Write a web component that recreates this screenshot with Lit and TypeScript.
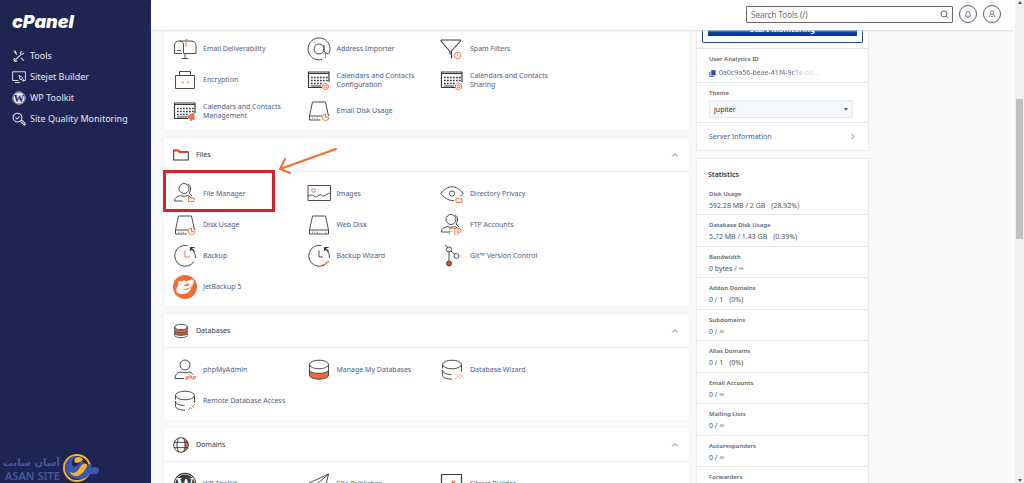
import { LitElement, html, css, svg } from "lit";
import { customElement, property } from "lit/decorators.js";

const O = "#f26b35";

const user = svg`<circle cx="12" cy="7" r="5"/><path d="M2 20.500h9M2 20.500c0-4 2-5.500 5-6.500 3 1 7 1 9 0 2 0.500 3 1 4 2.500"/>`;
const users = svg`<circle cx="11" cy="6.500" r="5"/><path d="M15 2c3 1 3.500 6 1 9l3 3M1.500 19h8M1.500 19c0-3 2-4.500 6-5.500 2 1 5 1 7 0l3 1.500"/>`;
const drive = svg`<path d="M5.500 3h13l3 14M5.500 3 2.500 17v4h11M2.500 17H15"/><path d="M5 19.200h.8M7.500 19.200h.8M10 19.200h.8"/>`;
const calendar = svg`<path d="M22 14V4H1.500v15.500H15M1.500 5.500H22" stroke-width="1.200"/><path d="M4 9.500h17M4 12.500h17M4 15.500h11" stroke-width="1.700" stroke-dasharray="1.700 1.300"/><path d="M4 18h10" stroke-width="1"/>`;
const clock = svg`<path d="M14.500 1.500A10.500 10.500 0 1 0 21 17.500M22.500 14a10.500 10.500 0 0 0-2-7"/><path d="M17.500 7V3.500h4M17.500 3.500l4 4" stroke-width="1.200"/>`;
const cylinder = svg`<ellipse cx="12" cy="6.500" rx="9.500" ry="4.300"/><path d="M2.500 6.500v4M21.500 6.500v7M2.500 12c0 3 4 4.500 9 4.500M2.500 12v5c0 2.500 4 4.200 9.500 4.200"/>`;
const spark = svg`<path stroke=${O} stroke-dasharray="1.500 1" d="M15.500 21l5.500-5.500M16 16.500l1.500 1.500M19 19l1.500 1.500M21 18h1.500"/>`;
const pie = svg`<path stroke=${O} d="M18.500 15a3.300 3.300 0 1 0 3.300 3.300h-3.300zM20 14.500c1.300.3 2 1 2.300 2.300"/>`;
const wordpress = svg`<circle cx="12" cy="12" r="10.700" stroke-width="1.200"/><circle cx="12" cy="12" r="9.600" fill="currentColor" stroke="none"/><text class="wp" x="12" y="18.500">W</text>`;

const icons: Record<string, unknown> = {
  mail: svg`<path d="M9 16.500H1.500V8C1.500 5.500 3.500 4 6 4h12c3 0 5 1.500 5 4.500v8H10.500V8C10.500 5.500 9 4 6.500 4M4 13.500h4M12 16.500V21M8.500 21.500h7"/><path stroke=${O} d="M13 10V2.500h1.500"/>`,
  address: svg`<circle cx="12" cy="12" r="5"/><path d="M17 8v6c1 2.500 3 3 4.500 2.500"/><path d="M22 16.500A11 11 0 1 0 15 22.500"/><path stroke=${O} d="M18.500 21v-5.500M16 17.500l2.500-2.500 2.500 2.500"/>`,
  filter: svg`<path d="M1 3h19.500v1L11.500 14v7.500M1 3v1l9 10.500v3" stroke-width="1.100"/><circle cx="17.500" cy="18.500" r="3.200" stroke=${O}/><path stroke=${O} d="M17.500 17v1.500"/>`,
  lock: svg`<path d="M6.500 7.500v-4h11v4M2.500 7.500h19v13h-19z"/><path stroke=${O} stroke-width="1.600" d="M9 14.500h1.500M14 14.500h1.500"/>`,
  calConfig: svg`${calendar}<circle cx="18.500" cy="18.500" r="3" stroke=${O}/><circle cx="18.500" cy="18.500" r="1.200" stroke=${O}/>`,
  calShare: svg`${calendar}<path stroke=${O} d="M18.500 15l3 1.800v3.400l-3 1.800-3-1.800v-3.400z"/><circle cx="18.500" cy="18.500" r="1.300" stroke=${O}/>`,
  calManage: svg`${calendar}<path fill=${O} stroke=${O} d="M14.500 17.500l6.500-3.500v7l-2.500-1.500v2.500l-2-2.500z"/>`,
  drivePie: svg`${drive}${pie}`,
  drive: svg`${drive}<path d="M13.500 21h8v-4H15M18.500 19.200h.8"/>`,
  fileManager: svg`${users}<path stroke=${O} d="M15.500 19.500v-4.500h2l.6 1H21v3.500z"/>`,
  images: svg`<path d="M1 3.500h22.500v15H1z"/><path d="M1 14.500c2-2 4-2 6-.5s3 .5 5-1 3 2 5 1 4-2.500 6-3"/><circle cx="6.500" cy="8.500" r="1.800" stroke=${O}/>`,
  eye: svg`<path d="M14 18.500C8 19 3.500 15 .8 11.500 8 2.500 16 2.500 23.200 11.500L20 14.500"/><circle cx="12" cy="11.500" r="2.600"/><path stroke=${O} d="M16 20.500V16h2l.6 1H22v3.500z"/>`,
  ftp: svg`${users}<text class="tag" x="8.500" y="21.800" font-size="8">FTP</text>`,
  backup: svg`${clock}<path stroke=${O} d="M12 6.500V13h5"/>`,
  backupWizard: svg`${clock}<path d="M12 6.500V13h4"/>${spark}`,
  git: svg`<path d="M5 1l3 2.500M9 8v9M11 7l4 3.500"/><circle cx="9" cy="5.500" r="2.500"/><circle cx="16.500" cy="12" r="2.500"/><circle cx="9" cy="19.500" r="2.500" fill="#e2522b"/>`,
  jet: svg`<circle cx="12" cy="12" r="12" fill=${O} stroke="none"/><path fill="#fff" stroke="none" d="M5.500 6l3.500.5 2.500-1.500 1 1.500 6.500-2c1.500 0 2 2 1.500 4-.8 3-3.500 4.500-6 5l-4.500.5c.8 1.500 5 .8 8.500-1.500-1.500 4.500-5 6.500-9.500 6.500-4.500 0-6-2-5.500-5l1.500-4.500z"/><path fill=${O} stroke="none" d="M10.500 11c1.500-2 4-3 6-2.300-.5 1.800-3 2.500-6 2.300z"/>`,
  php: svg`${user}<text class="tag heavy" x="12.500" y="20.500" font-size="6">php</text>`,
  manageDb: svg`<path fill=${O} d="M2.500 12v5c0 5.500 19 5.500 19 0v-5c0 4.500-19 4.500-19 0z"/><ellipse cx="12" cy="6.500" rx="9.500" ry="4.300"/><path d="M2.500 6.500V12M21.500 6.500V12"/>`,
  dbWizard: svg`${cylinder}${spark}`,
  remoteDb: svg`${cylinder}<path stroke=${O} d="M15 21l2-2M20 17l2-2M17 18l2 2M18.500 16.500l2 2"/>`,
  wordpress,
  plane: svg`<path d="M2 11L21.500 2l-4 17-6-4.500zM21.500 2L9 13v7l2.500-5.500"/>`,
  sitejet: svg`<path d="M1.500 2.500h20v20h-20z" stroke-width="1.200"/><path fill=${O} stroke=${O} d="M12 9l3 1-1 1 2 2-3 1z"/>`,
  folder: svg`<path d="M1 4.500v15h22V7H10L8.500 4.500z" stroke-width="1.600"/><path stroke="#e2431e" stroke-width="2.200" d="M1.500 5.500H8l1.500 2.500H22"/>`,
  databases: svg`<path fill=${O} d="M2.500 8v7.500c0 4 19 4 19 0V8c0 4-19 4-19 0z"/><path fill="#fff" d="M2.500 15.500v3c0 4.500 19 4.500 19 0v-3c0 4-19 4-19 0z" stroke-width="1.300"/><ellipse cx="12" cy="6" rx="9.500" ry="4" stroke-width="1.300" fill="#fff"/><path d="M2.500 6V9M21.500 6V9M2.500 12c0 4 19 4 19 0" stroke-width="1.300"/>`,
  domains: svg`<path fill=${O} stroke="none" d="M16 1.500c9 3.500 9 17.500 0 21 3-6 3-15 0-21z"/><g stroke-width="1.400"><circle cx="12" cy="12" r="11"/><path d="M1.500 8h21M1.500 16h21M9 1.500c-4 5-4 16 0 21M15 1.500c4 5 4 16 0 21"/></g>`,
  tools: svg`<g stroke-width="1.800"><path d="M4 20.500L15 9.500M8.500 9.500l-4-4M15 15l5.500 5.500"/><path d="M3 3l2.500 1L7 7M20.500 6.500L18 9l-3-.5L14.500 6 17 3.500M9 20l-3 1.500-3-3 2-3"/></g>`,
  monitor: svg`<g stroke-width="1.600"><path d="M11 18H1V3h22v15h-4M5 21.500h9"/><path d="M12 9l6 4-1 1 4 4-1.500 1.500-4-4-1.500 1z"/></g>`,
  quality: svg`<g stroke-width="1.800"><circle cx="9.500" cy="9.500" r="7.500"/><path d="M6 9.500l2.500 2.500L13 7.500M15 15l2-1 6 6.500-2 2-6-6z"/></g>`,
  chevronUp: svg`<path d="M4 16l8-8 8 8" stroke-width="2.600"/>`,
  chevronRight: svg`<path d="M8 3l9 9-9 9" stroke-width="3"/>`,
  search: svg`<circle cx="10.500" cy="10.500" r="8" stroke-width="2.200"/><path d="M16.500 16.500l5 5" stroke-width="2.200"/>`,
  bell: svg`<path d="M3 18.500c2.500-2 2-4 2.500-8a6.500 6.500 0 0 1 13 0c.5 4 0 6 2.500 8zM9 22h6" stroke-width="2"/>`,
  person: svg`<circle cx="12" cy="8" r="5.500" stroke-width="2"/><path d="M4 22c0-5 2.500-7.500 5.500-9M20 22c0-5-2.500-7.500-5.500-9M8 17l4 4 4-4" stroke-width="2"/>`,
  copy: svg`<path fill="#2b4aa0" stroke="#2b4aa0" d="M8 1h14v17H8z"/><path d="M3 6v16h13" stroke="#2b4aa0" stroke-width="3"/>`,
};

@customElement("ui-icon")
class UiIcon extends LitElement {
  @property() name = "";
  static styles = css`
    :host { display: block; flex: none; width: 24px; height: 24px; }
    svg { display: block; width: 100%; height: 100%; overflow: visible; fill: none; stroke: currentColor; stroke-width: 0.900; stroke-linejoin: round; }
    .tag { fill: #f26b35; stroke: none; font-family: "Noto Sans", sans-serif; }
    .heavy { font-weight: 700; font-style: italic; }
    .wp { fill: var(--mark, #fff); stroke: none; font: 700 18px "Liberation Serif", serif; text-anchor: middle; }
  `;
  render() {
    return html`<svg viewBox="0 0 24 24" aria-hidden="true">${icons[this.name]}</svg>`;
  }
}

type Tool = [icon: string, label: string];

const emailTools: Tool[] = [
  ["mail", "Email Deliverability"],
  ["address", "Address Importer"],
  ["filter", "Spam Filters"],
  ["lock", "Encryption"],
  ["calConfig", "Calendars and Contacts Configuration"],
  ["calShare", "Calendars and Contacts Sharing"],
  ["calManage", "Calendars and Contacts Management"],
  ["drivePie", "Email Disk Usage"],
];
const fileTools: Tool[] = [
  ["fileManager", "File Manager"],
  ["images", "Images"],
  ["eye", "Directory Privacy"],
  ["drivePie", "Disk Usage"],
  ["drive", "Web Disk"],
  ["ftp", "FTP Accounts"],
  ["backup", "Backup"],
  ["backupWizard", "Backup Wizard"],
  ["git", "Git™ Version Control"],
  ["jet", "JetBackup 5"],
];
const databaseTools: Tool[] = [
  ["php", "phpMyAdmin"],
  ["manageDb", "Manage My Databases"],
  ["dbWizard", "Database Wizard"],
  ["remoteDb", "Remote Database Access"],
];
const domainTools: Tool[] = [
  ["wordpress", "WP Toolkit"],
  ["plane", "Site Publisher"],
  ["sitejet", "Sitejet Builder"],
];

@customElement("tool-card")
class ToolCard extends LitElement {
  @property() heading = "";
  @property() icon = "";
  @property() highlight = "";
  @property({ attribute: false }) tools: Tool[] = [];
  static styles = css`
    :host { display: block; background: #fff; box-shadow: 0 0 3px #f0f0f0; color: #3a3a3a; }
    .head { display: flex; align-items: center; height: 33px; padding: 0 10px 0 9px; border-bottom: 1px solid #eee; }
    .sectionIcon { width: 16px; height: 16px; }
    h2 { flex: 1; margin: 0 0 0 7px; font-size: 7px; font-weight: 400; color: #293a4a; }
    button { display: flex; padding: 0; border: 0; background: none; color: #666; }
    .chevron { width: 8px; height: 8px; }
    .grid { display: grid; grid-template-columns: repeat(3, minmax(0, 1fr)); grid-auto-rows: 31px; padding: 6px 22% 4px 9px; }
    .headless { padding-top: 3px; }
    .cell { position: relative; display: flex; align-items: center; }
    a { display: flex; align-items: center; gap: 6px; color: #4d6288; text-decoration: none; }
    .toolIcon { color: #3a3a3a; --mark: #fff; }
    .label { max-width: 90px; line-height: 9px; }
    .frame { position: absolute; inset: -8px 32px -3px -10px; border: 3px solid #dc1f2c; pointer-events: none; }
    .arrow { position: absolute; left: 105px; top: -31px; width: 60px; height: 28px; overflow: visible; fill: none; stroke: #f26f2f; stroke-width: 2; stroke-linecap: round; }
  `;
  render() {
    return html`
      ${this.heading
        ? html`<div class="head">
            <ui-icon class="sectionIcon" name=${this.icon}></ui-icon>
            <h2>${this.heading}</h2>
            <button aria-label="Collapse ${this.heading}"><ui-icon class="chevron" name="chevronUp"></ui-icon></button>
          </div>`
        : null}
      <div class="grid ${this.heading ? "" : "headless"}">
        ${this.tools.map(
          ([icon, label]) => html`<div class="cell">
            <a href="#"><ui-icon class="toolIcon" name=${icon}></ui-icon><span class="label">${label}</span></a>
            ${label === this.highlight
              ? html`<div class="frame"></div>
                  <svg class="arrow" viewBox="0 0 60 28" aria-hidden="true"><path d="M58 2L2 22M7 12L2 22l10 4"/></svg>`
              : null}
          </div>`
        )}
      </div>`;
  }
}

const stats: [string, string, string][] = [
  ["Disk Usage", "592.28 MB / 2 GB", "(28.92%)"],
  ["Database Disk Usage", "5.72 MB / 1.43 GB", "(0.39%)"],
  ["Bandwidth", "0 bytes / ∞", ""],
  ["Addon Domains", "0 / 1", "(0%)"],
  ["Subdomains", "0 / ∞", ""],
  ["Alias Domains", "0 / 1", "(0%)"],
  ["Email Accounts", "0 / ∞", ""],
  ["Mailing Lists", "0 / ∞", ""],
  ["Autoresponders", "0 / ∞", ""],
  ["Forwarders", "0 / ∞", ""],
];

@customElement("info-panel")
class InfoPanel extends LitElement {
  static styles = css`
    :host { display: flex; flex-direction: column; gap: 7px; color: #555; }
    .card { background: #fff; border: 1px solid #ececec; }
    .general { border-top: 0; }
    .block { padding: 0 12px; border-bottom: 1px solid #e6e6e6; }
    .promo { padding: 0 5px 5px; }
    .promoFrame { padding: 0 5px 6px; border: 1px solid #1c429c; border-top: 0; border-radius: 0 0 2px 2px; }
    .promo button { display: block; width: 100%; height: 14px; margin-top: -8px; padding: 0; border: 0; background: #0339a6; color: #fff; font: 600 8px/14px "Noto Sans", sans-serif; }
    .caption { display: block; font-size: 6px; font-weight: 600; line-height: 10px; color: #5f6470; }
    .analytics { padding-top: 5px; padding-bottom: 4px; }
    .id { display: flex; align-items: center; gap: 3px; margin-top: 4px; line-height: 10px; }
    .idText { background: linear-gradient(90deg, #53627f 75%, #b9bfca 80%, #dfe2e7); background-clip: text; -webkit-background-clip: text; color: transparent; }
    .copy { width: 7px; height: 7px; }
    .theme { padding-top: 5px; padding-bottom: 4px; }
    .selectBox { position: relative; display: flex; align-items: center; margin: 2px 3px 0 0; }
    select { appearance: none; width: 100%; height: 18px; padding: 0 4px; border: 1px solid #e6eaf0; border-radius: 1px; background: #f4f7fb; color: #333; font: 400 7px "Noto Sans", sans-serif; }
    .caret { position: absolute; right: 5px; border: 2px solid transparent; border-top: 3px solid #666; border-bottom: 0; pointer-events: none; }
    .server { display: flex; justify-content: space-between; align-items: center; height: 27px; padding: 0 12px; color: #4d6288; text-decoration: none; }
    .next { width: 7px; height: 7px; color: #777; }
    h2 { margin: 0; padding: 11px 11px 4px; font-size: 7px; font-weight: 600; line-height: 10px; color: #293a4a; }
    dl { margin: 0; }
    .stat { padding: 5px 12px 3px; border-bottom: 1px solid #e6e6e6; }
    .stat:nth-child(even) { padding-bottom: 4px; }
    dd { display: flex; gap: 6px; margin: 2px 0 0; line-height: 10px; }
  `;
  render() {
    return html`
      <div class="card general">
        <div class="block promo"><div class="promoFrame"><button>Start Monitoring</button></div></div>
        <div class="block analytics">
          <span class="caption">User Analytics ID</span>
          <div class="id"><ui-icon class="copy" name="copy"></ui-icon><span class="idText">0a0c9a56-beae-41f4-9c1e-bb...</span></div>
        </div>
        <div class="block theme">
          <label class="caption" for="theme">Theme</label>
          <div class="selectBox"><select id="theme"><option>jupiter</option></select><span class="caret"></span></div>
        </div>
        <a class="server" href="#">Server Information<ui-icon class="next" name="chevronRight"></ui-icon></a>
      </div>
      <div class="card">
        <h2>Statistics</h2>
        <dl>
          ${stats.map(
            ([name, value, share]) => html`<div class="stat">
              <dt class="caption">${name}</dt>
              <dd><span>${value}</span>${share ? html`<span>${share}</span>` : null}</dd>
            </div>`
          )}
        </dl>
      </div>`;
  }
}

@customElement("app-root")
class AppRoot extends LitElement {
  static styles = css`
    :host { display: flex; height: 100vh; overflow: hidden; background: #f9f9f9; font: 400 7px "Noto Sans", "Open Sans", sans-serif; }
    .side { display: flex; flex-direction: column; flex: none; width: 151px; background: #1e2553; color: #e4e7f2; }
    .logo { padding: 11px 12px 0; font: italic 900 18px/22px "Inter", sans-serif; color: #fff; }
    nav { display: flex; flex-direction: column; padding: 12px 12px 0; }
    nav a { display: flex; align-items: center; gap: 4px; height: 21px; color: inherit; font-size: 9px; text-decoration: none; --mark: #1e2553; }
    nav ui-icon { width: 14px; height: 14px; }
    .brand { display: flex; align-items: center; gap: 2px; margin-top: auto; padding: 0 3px; color: #4358a3; }
    .brandText { display: flex; flex-direction: column; align-items: flex-end; }
    .brandFa { font: 700 10px/14px "DejaVu Sans", sans-serif; }
    .brandEn { font: 600 11px/11px "Noto Sans", sans-serif; }
    .brandMark { width: 38px; height: 30px; }
    .page { display: flex; flex-direction: column; flex: 1; min-width: 0; }
    header { position: relative; display: flex; justify-content: flex-end; align-items: center; gap: 6px; flex: none; height: 30px; padding: 0 14px 2px 0; box-sizing: border-box; background: #fff; box-shadow: 0 2px 2px -1px #ddd; z-index: 1; }
    .search { position: relative; display: flex; align-items: center; width: 207px; }
    .search input { width: 100%; height: 17px; box-sizing: border-box; padding: 0 20px 0 4px; border: 1px solid #666; border-radius: 1px; background: #fff; font: 400 8px "Noto Sans", sans-serif; color: #333; }
    .search input::placeholder { color: #6b6b6b; opacity: 1; }
    .search ui-icon { position: absolute; right: 4px; width: 9px; height: 9px; color: #444; }
    .round { display: flex; align-items: center; justify-content: center; width: 18px; height: 18px; padding: 0; border: 1px solid #555d77; border-radius: 50%; background: #fff; color: #444b66; }
    .round ui-icon { width: 8px; height: 8px; }
    main { display: grid; grid-template-columns: minmax(0, 525px) 173px; gap: 7px; align-items: start; padding: 0 12px 0 13px; min-height: 0; overflow: hidden; }
    .cards { display: flex; flex-direction: column; gap: 8px; }
    .scroll { display: flex; flex-direction: column; flex: none; width: 9px; background: #f1f1f1; }
    .up, .down { flex: none; align-self: center; border: 2px solid transparent; }
    .up { margin-top: 1px; border-bottom: 3px solid #555; border-top: 0; }
    .down { border-top: 3px solid #555; border-bottom: 0; margin-bottom: 1px; }
    .before { flex: 95; }
    .thumb { flex: 140; margin: 0 1px; background: #c1c1c1; }
    .after { flex: 240; }
  `;
  render() {
    return html`
      <aside class="side">
        <div class="logo">cPanel</div>
        <nav>
          <a href="#"><ui-icon name="tools"></ui-icon>Tools</a>
          <a href="#"><ui-icon name="monitor"></ui-icon>Sitejet Builder</a>
          <a href="#"><ui-icon name="wordpress"></ui-icon>WP Toolkit</a>
          <a href="#"><ui-icon name="quality"></ui-icon>Site Quality Monitoring</a>
        </nav>
        <div class="brand">
          <div class="brandText"><span class="brandFa" lang="fa" dir="rtl">آسان سایت</span><span class="brandEn">ASAN SITE</span></div>
          <svg class="brandMark" viewBox="0 0 38 30" aria-hidden="true">
            <circle cx="15" cy="15" r="13" fill="none" stroke="#f2b431" stroke-width="2"/>
            <path fill="#3c55ae" d="M4 18C1 9 8 2 15 3c-6 3-6 8-4 10s6-2 9-5c4 2 5 7 3 11-3 5-9 8-14 5-3-1-4-4-5-6z"/>
            <path fill="#f2b431" d="M7 18c4 4 8 1 10-2s3-6 8-5c1 5-2 11-8 12-5 1-8-1-10-5zM13 5c3-2 7-1 8 2-2 2-4 3-7 3-2-1-2-3-1-5z"/>
            <path fill="#3c55ae" d="M9 23c7 2 12-2 15-8 2-4 4-5 6-3l-1 3c3-2 8-1 8 2 0 4-5 5-9 4-5 6-12 7-19 2z"/>
          </svg>
        </div>
      </aside>
      <div class="page">
        <header>
          <div class="search">
            <input type="search" placeholder="Search Tools (/)" aria-label="Search Tools" />
            <ui-icon name="search"></ui-icon>
          </div>
          <button class="round" aria-label="Notifications"><ui-icon name="bell"></ui-icon></button>
          <button class="round" aria-label="Account"><ui-icon name="person"></ui-icon></button>
        </header>
        <main>
          <div class="cards">
            <tool-card .tools=${emailTools}></tool-card>
            <tool-card heading="Files" icon="folder" highlight="File Manager" .tools=${fileTools}></tool-card>
            <tool-card heading="Databases" icon="databases" .tools=${databaseTools}></tool-card>
            <tool-card heading="Domains" icon="domains" .tools=${domainTools}></tool-card>
          </div>
          <info-panel></info-panel>
        </main>
      </div>
      <div class="scroll" aria-hidden="true">
        <span class="up"></span><span class="before"></span><span class="thumb"></span><span class="after"></span><span class="down"></span>
      </div>`;
  }
}
